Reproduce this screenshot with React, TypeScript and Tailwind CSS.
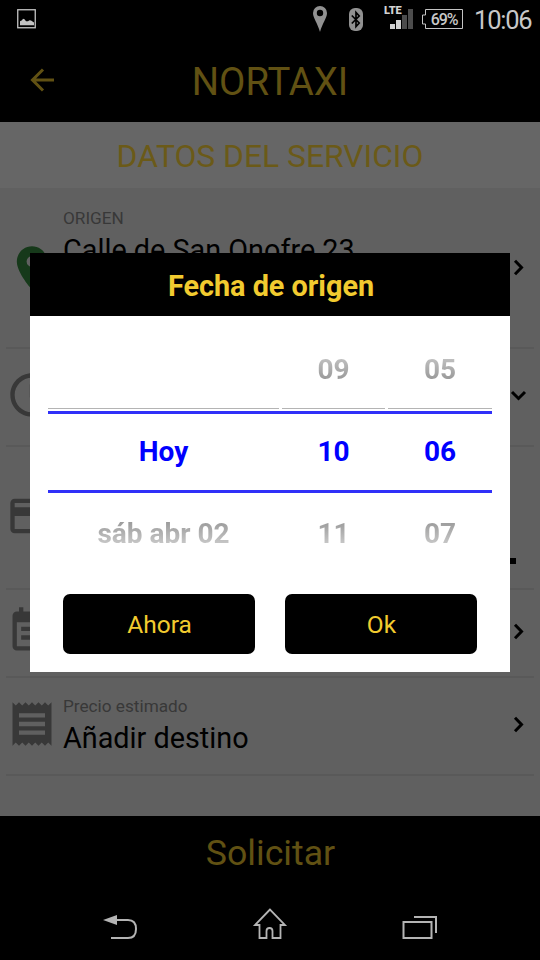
import type { ReactNode } from "react";
import { MdCreditCard, MdPlace, MdReceipt, MdSchedule } from "react-icons/md";

const COLUMNS = [
  { id: "day", width: "w-[231px]", prev: "", current: "Hoy", next: "sáb abr 02" },
  { id: "hour", width: "w-[103px]", prev: "09", current: "10", next: "11" },
  { id: "minute", width: "w-[104px]", prev: "05", current: "06", next: "07" },
];

function StatusBar() {
  return (
    <div className="flex h-[38px] shrink-0 items-center pl-[17px] pr-[9px]">
      <svg width="19" height="20" viewBox="0 0 19 20" fill="none">
        <rect x="0.75" y="0.75" width="17.5" height="18" stroke="#c4c4c4" strokeWidth="1.3" />
        <path d="M3 16.300v-4l2-1 1-1.500 1.500.5 1.500 2h2l1.500-1 1.500.3 3 2v2.700z" fill="#c4c4c4" />
      </svg>
      <div className="ml-auto flex items-center">
        <svg width="14" height="26" viewBox="0 0 14 26" className="mr-[22px]">
          <path
            fillRule="evenodd"
            fill="#919191"
            d="M7 0a7 7 0 0 1 7 7c0 5-4.500 10-7 19C4.500 17 0 12 0 7a7 7 0 0 1 7-7zm0 3.800a3.200 3.200 0 1 0 0 6.400 3.200 3.200 0 0 0 0-6.400z"
          />
        </svg>
        <svg width="14" height="23" viewBox="0 0 14 23" fill="none" className="mr-[21px]">
          <rect width="14" height="23" rx="6" fill="#919191" />
          <path d="M2.800 7.500l7.400 7.500L7 18.500V4.500L10.200 8l-7.400 7.500" stroke="#000" strokeWidth="1.700" />
        </svg>
        <div className="relative mb-[4px] mr-[9px] h-[23px] w-[29px]">
          <svg width="29" height="23" viewBox="0 0 29 23">
            <rect x="6" y="18" width="5" height="5" fill="#d2d2d2" />
            <rect x="12" y="14" width="5" height="9" fill="#d2d2d2" />
            <rect x="18" y="9" width="5" height="14" fill="#4c4c4c" />
            <rect x="24" y="3" width="5" height="20" fill="#4c4c4c" />
          </svg>
          <span className="absolute -top-[1px] left-0 text-[11px] font-black leading-[11px] tracking-[-0.200px] text-[#d2d2d2]">
            LTE
          </span>
        </div>
        <div className="relative mr-[11px] flex h-[20px] w-[41px] items-center justify-center">
          <svg width="41" height="20" viewBox="0 0 41 20" fill="none" className="absolute inset-0">
            <path d="M3.500 .5h37v19h-37v-4.500h-3v-9h3z" stroke="#c4c4c4" />
          </svg>
          <span className="relative pl-[3px] pt-[2px] text-[16px] font-medium leading-none tracking-[-1.100px] text-[#c8c8c8]">
            69%
          </span>
        </div>
        <span className="-mr-[1px] w-[58px] pt-[3px] text-[25.500px] leading-none tracking-[-1.200px] text-[#c8c8c8]">
          10:06
        </span>
      </div>
    </div>
  );
}

function NoteIcon() {
  return (
    <svg width="52" height="52" viewBox="0 0 24 24" fill="currentColor">
      <path d="M17 10H7v2h10v-2zm2-7h-1V1h-2v2H8V1H6v2H5c-1.110 0-2 .9-2 2v14c0 1.100.890 2 2 2h14c1.100 0 2-.9 2-2V5c0-1.100-.9-2-2-2zm0 16H5V8h14v11zm-5-5H7v2h7v-2z" />
    </svg>
  );
}

function Chevron({ down = false }: { down?: boolean }) {
  return (
    <svg width="17" height="17" viewBox="0 0 17 17" fill="none" stroke="#000" strokeWidth="3" className="ml-auto shrink-0">
      <path d={down ? "M2 5l6.500 6.500L15 5" : "M5 1.800l6.500 6.700L5 15.200"} />
    </svg>
  );
}

type RowProps = {
  icon: ReactNode;
  height: string;
  label?: string;
  value?: string;
  children?: ReactNode;
  top?: boolean;
};

function Row({ icon, height, label, value, children, top = false }: RowProps) {
  return (
    <div className={`flex ${height} shrink-0 items-center border-b-2 border-[#595959] pr-[7px] ${top ? "" : "pb-[4px]"}`}>
      <div className="w-[57px] shrink-0 text-[52px] text-[#383838]">{icon}</div>
      {label && (
        <div className={top ? "self-start pt-[20px]" : "pt-[5px]"}>
          <p className="text-[17.200px] leading-[20px] text-[#383838]">{label}</p>
          <p className="mt-[3px] whitespace-nowrap text-[28.800px] leading-[38px] text-black">{value}</p>
        </div>
      )}
      {children}
    </div>
  );
}

function DatePicker() {
  return (
    <div className="relative px-[18px] pt-[12px]">
      <div className="flex justify-between text-[28px] font-bold leading-none">
        {COLUMNS.map((col) => (
          <div key={col.id} className={`flex flex-col text-center ${col.width}`}>
            <div className="flex h-[81px] items-center justify-center border-b border-[#b4b4b4] pt-[3px]">
              <span className="bg-linear-to-b from-[#c4c4c4] to-[#929292] bg-clip-text text-transparent">{col.prev}</span>
            </div>
            <div className="mt-[5px] flex h-[76px] items-center justify-center text-[#0000ff]">{col.current}</div>
            <div className="mt-[3px] flex h-[81px] items-center justify-center">
              <span className="bg-linear-to-b from-[#989898] to-[#d0d0d0] bg-clip-text text-transparent">{col.next}</span>
            </div>
          </div>
        ))}
      </div>
      {/* selection band over the three wheels */}
      <div className="pointer-events-none absolute left-[18px] right-[18px] top-[95px] h-[82px] border-y-[3px] border-[#3030f8]" />
    </div>
  );
}

function DateDialog() {
  return (
    <div className="absolute left-[30px] top-[253px] flex h-[419px] w-[480px] flex-col bg-white">
      <h2 className="flex h-[63px] shrink-0 items-center justify-center bg-black pl-[2px] pt-[3px] text-[28.800px] font-bold leading-none text-[#f2cb2f]">
        Fecha de origen
      </h2>
      <DatePicker />
      <div className="mt-[20px] flex justify-center gap-[30px] text-[24.500px] text-[#f2cb2f]">
        <button className="h-[60px] w-[192px] rounded-[7px] bg-black pl-[1px] pt-[2px]">Ahora</button>
        <button className="h-[60px] w-[192px] rounded-[7px] bg-black pl-[1px] pt-[2px]">Ok</button>
      </div>
    </div>
  );
}

function NavBar() {
  return (
    <div className="flex flex-1 items-start justify-between px-[103px] pt-[18px]">
      <svg width="35" height="32" viewBox="0 0 35 32" fill="none">
        <path d="M13 12h12c5.500 0 8 3.500 8 9s-2.500 9-8 9H8" stroke="#b4b4b4" strokeWidth="2" />
        <path d="M0 12l14-5v10z" fill="#b4b4b4" />
      </svg>
      <svg width="36" height="32" viewBox="0 0 36 32" fill="none" stroke="#b4b4b4" strokeWidth="1.800" className="mr-[1px]">
        <path d="M18 1.500L3 17H7.500v13h7v-7c0-4 6-4 6 0v7h8V17h4.500z" />
      </svg>
      <svg width="35" height="32" viewBox="0 0 35 32" fill="none" stroke="#b4b4b4" strokeWidth="2">
        <path d="M1.500 14h28v16h-28zM12 9h22v16" />
      </svg>
    </div>
  );
}

export default function App() {
  return (
    <div className="relative flex h-[960px] w-[540px] flex-col overflow-hidden bg-black font-[Roboto,sans-serif]">
      <StatusBar />
      <header className="relative flex h-[84px] shrink-0 items-center justify-center">
        <svg
          width="26"
          height="24"
          viewBox="0 0 26 24"
          fill="none"
          stroke="#615113"
          strokeWidth="3"
          className="absolute left-[29px] top-[30px]"
        >
          <path d="M25 12H3M14 1.500L3.500 12 14 22.500" />
        </svg>
        <h1 className="pt-[5px] text-[38.300px] leading-none text-[#615113]">NORTAXI</h1>
      </header>

      <div className="flex h-[66px] shrink-0 items-center justify-center bg-[#666] pt-[4px] text-[31.800px] leading-none text-[#6b5a18]">
        DATOS DEL SERVICIO
      </div>

      <main className="flex h-[628px] shrink-0 flex-col bg-[#606060] px-[6px]">
        <Row icon={<MdPlace className="text-[#16391a]" />} height="h-[161px]" label="ORIGEN" value="Calle de San Onofre 23" top>
          <Chevron />
        </Row>
        <Row icon={<MdSchedule />} height="h-[98px]">
          <Chevron down />
        </Row>
        <Row icon={<MdCreditCard />} height="h-[143px]">
          <div className="mb-[20px] ml-auto mr-[11px] h-[6px] w-[20px] self-end bg-black" />
        </Row>
        <Row icon={<NoteIcon />} height="h-[88px]">
          <Chevron />
        </Row>
        <Row icon={<MdReceipt />} height="h-[98px]" label="Precio estimado" value="Añadir destino">
          <Chevron />
        </Row>
      </main>

      <button className="h-[74px] shrink-0 pl-[1px] pt-[2px] text-[35.700px] leading-none text-[#615113]">Solicitar</button>
      <NavBar />
      <DateDialog />
    </div>
  );
}
